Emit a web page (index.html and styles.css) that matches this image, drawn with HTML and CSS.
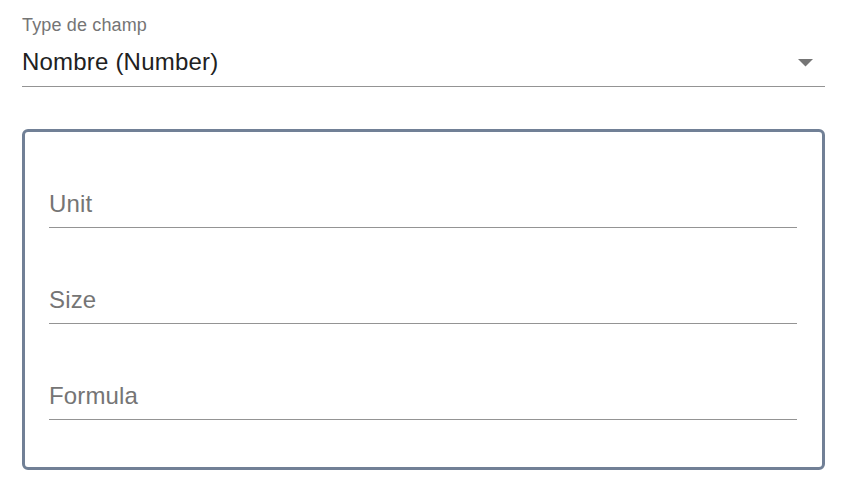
FILE: index.html
```html
<!DOCTYPE html>
<html lang="fr">
<head>
<meta charset="utf-8">
<title>Type de champ</title>
<link rel="stylesheet" href="styles.css">
</head>
<body>
<div class="page">
  <div class="select-field">
    <label class="select-label">Type de champ</label>
    <div class="select-row">
      <span class="select-value">Nombre (Number)</span>
      <svg class="select-arrow" width="15" height="8" viewBox="0 0 15 8" aria-hidden="true"><path d="M0 0 L7.5 7.5 L15 0 Z" fill="#757575"/></svg>
    </div>
  </div>
  <div class="card">
    <div class="text-field"><span class="placeholder">Unit</span></div>
    <div class="text-field"><span class="placeholder">Size</span></div>
    <div class="text-field"><span class="placeholder">Formula</span></div>
  </div>
</div>
</body>
</html>
```
FILE: styles.css
```css
html, body {
  margin: 0;
  padding: 0;
  background: #ffffff;
}
body {
  font-family: "Liberation Sans", Arial, sans-serif;
}
.page {
  padding: 0 31px 0 22px;
}
.select-field {
  display: flex;
  flex-direction: column;
}
.select-label {
  padding-top: 15px;
  font-size: 18px;
  line-height: 21px;
  color: #757575;
  letter-spacing: 0.15px;
}
.select-row {
  margin-top: 12px;
  padding-bottom: 10px;
  border-bottom: 1px solid #949494;
  display: flex;
  align-items: center;
  justify-content: space-between;
}
.select-value {
  font-size: 24px;
  line-height: 28px;
  color: #212121;
  letter-spacing: 0.2px;
}
.select-arrow {
  margin-right: 12px;
  margin-top: 2px;
}
.card {
  margin-top: 42px;
  border: 3px solid #718096;
  border-radius: 6px;
  padding: 0 25px 47px 24px;
}
.text-field {
  height: 96px;
  box-sizing: border-box;
  border-bottom: 1px solid #949494;
  display: flex;
  align-items: flex-end;
  padding-bottom: 9px;
}
.placeholder {
  font-size: 24px;
  line-height: 28px;
  color: #757575;
  letter-spacing: 0.15px;
}
```
